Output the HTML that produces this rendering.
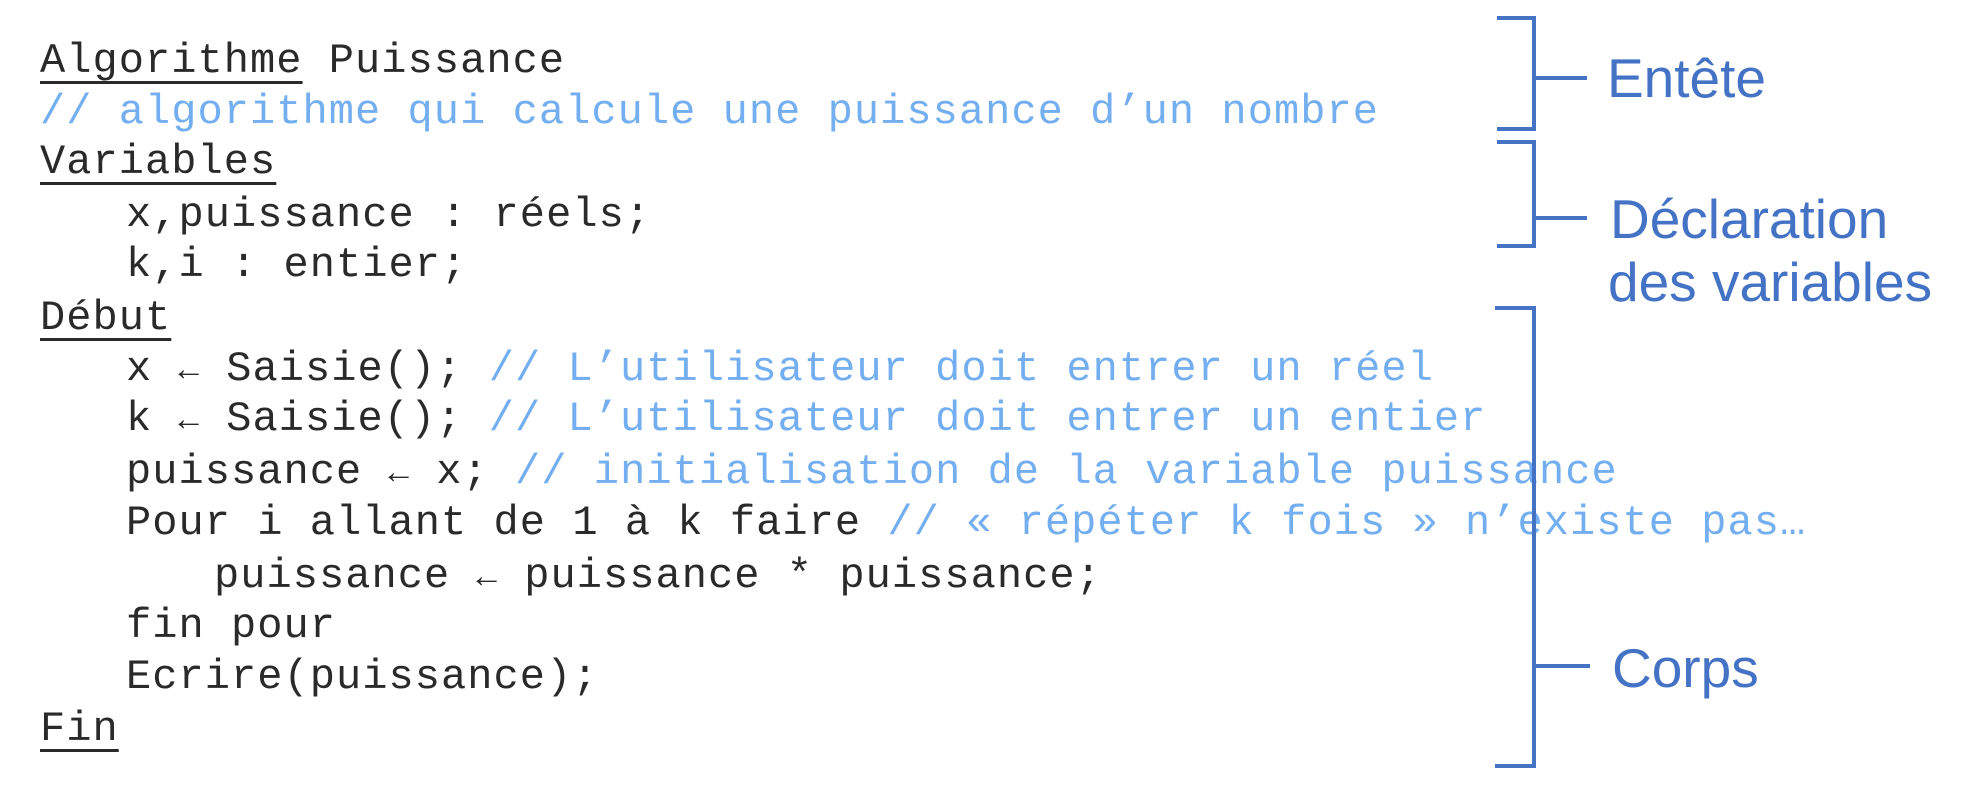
<!DOCTYPE html>
<html><head><meta charset="utf-8"><style>
html,body{margin:0;padding:0;background:#fff;}
body{width:1977px;height:790px;position:relative;overflow:hidden;}
.l{position:absolute;font-family:"Liberation Mono",monospace;font-size:42px;line-height:42px;color:#2a2a2a;white-space:pre;letter-spacing:1.05px;}
.c{color:#72aef0;}
.u{text-decoration:underline;text-decoration-thickness:3px;text-underline-offset:9px;}
.a{font-size:34px;}
.b{position:absolute;background:#4472c4;}
.t{position:absolute;font-family:"Liberation Sans","DejaVu Sans",sans-serif;font-size:55px;line-height:56px;color:#4472c4;white-space:pre;}
</style></head><body>
<div class="l" style="left:40px;top:40px"><span class="u">Algorithme</span> Puissance</div>
<div class="l c" style="left:40px;top:91px">// algorithme qui calcule une puissance d’un nombre</div>
<div class="l" style="left:40px;top:141px"><span class="u">Variables</span></div>
<div class="l" style="left:126px;top:194px">x,puissance : réels;</div>
<div class="l" style="left:126px;top:244px">k,i : entier;</div>
<div class="l" style="left:40px;top:297px"><span class="u">Début</span></div>
<div class="l" style="left:126px;top:348px">x <span class="a">←</span> Saisie(); <span class="c">// L’utilisateur doit entrer un réel</span></div>
<div class="l" style="left:126px;top:398px">k <span class="a">←</span> Saisie(); <span class="c">// L’utilisateur doit entrer un entier</span></div>
<div class="l" style="left:126px;top:451px">puissance <span class="a">←</span> x; <span class="c">// initialisation de la variable puissance</span></div>
<div class="l" style="left:126px;top:502px">Pour i allant de 1 à k faire <span class="c">// « répéter k fois » n’existe pas…</span></div>
<div class="l" style="left:214px;top:555px">puissance <span class="a">←</span> puissance * puissance;</div>
<div class="l" style="left:126px;top:605px">fin pour</div>
<div class="l" style="left:126px;top:656px">Ecrire(puissance);</div>
<div class="l" style="left:40px;top:708px"><span class="u">Fin</span></div>

<div class="b" style="left:1497px;top:16px;width:39px;height:4px"></div>
<div class="b" style="left:1532px;top:16px;width:4px;height:115px"></div>
<div class="b" style="left:1497px;top:127px;width:39px;height:4px"></div>
<div class="b" style="left:1534px;top:76px;width:53px;height:4px"></div>
<div class="t" style="left:1607px;top:50px">Entête</div>

<div class="b" style="left:1497px;top:140px;width:39px;height:4px"></div>
<div class="b" style="left:1532px;top:140px;width:4px;height:108px"></div>
<div class="b" style="left:1497px;top:244px;width:39px;height:4px"></div>
<div class="b" style="left:1534px;top:216px;width:53px;height:4px"></div>
<div class="t" style="left:1610px;top:191px">Déclaration</div>
<div class="t" style="left:1608px;top:254px">des variables</div>

<div class="b" style="left:1495px;top:306px;width:41px;height:4px"></div>
<div class="b" style="left:1532px;top:306px;width:4px;height:462px"></div>
<div class="b" style="left:1495px;top:764px;width:41px;height:4px"></div>
<div class="b" style="left:1534px;top:664px;width:56px;height:4px"></div>
<div class="t" style="left:1612px;top:640px">Corps</div>
</body></html>
